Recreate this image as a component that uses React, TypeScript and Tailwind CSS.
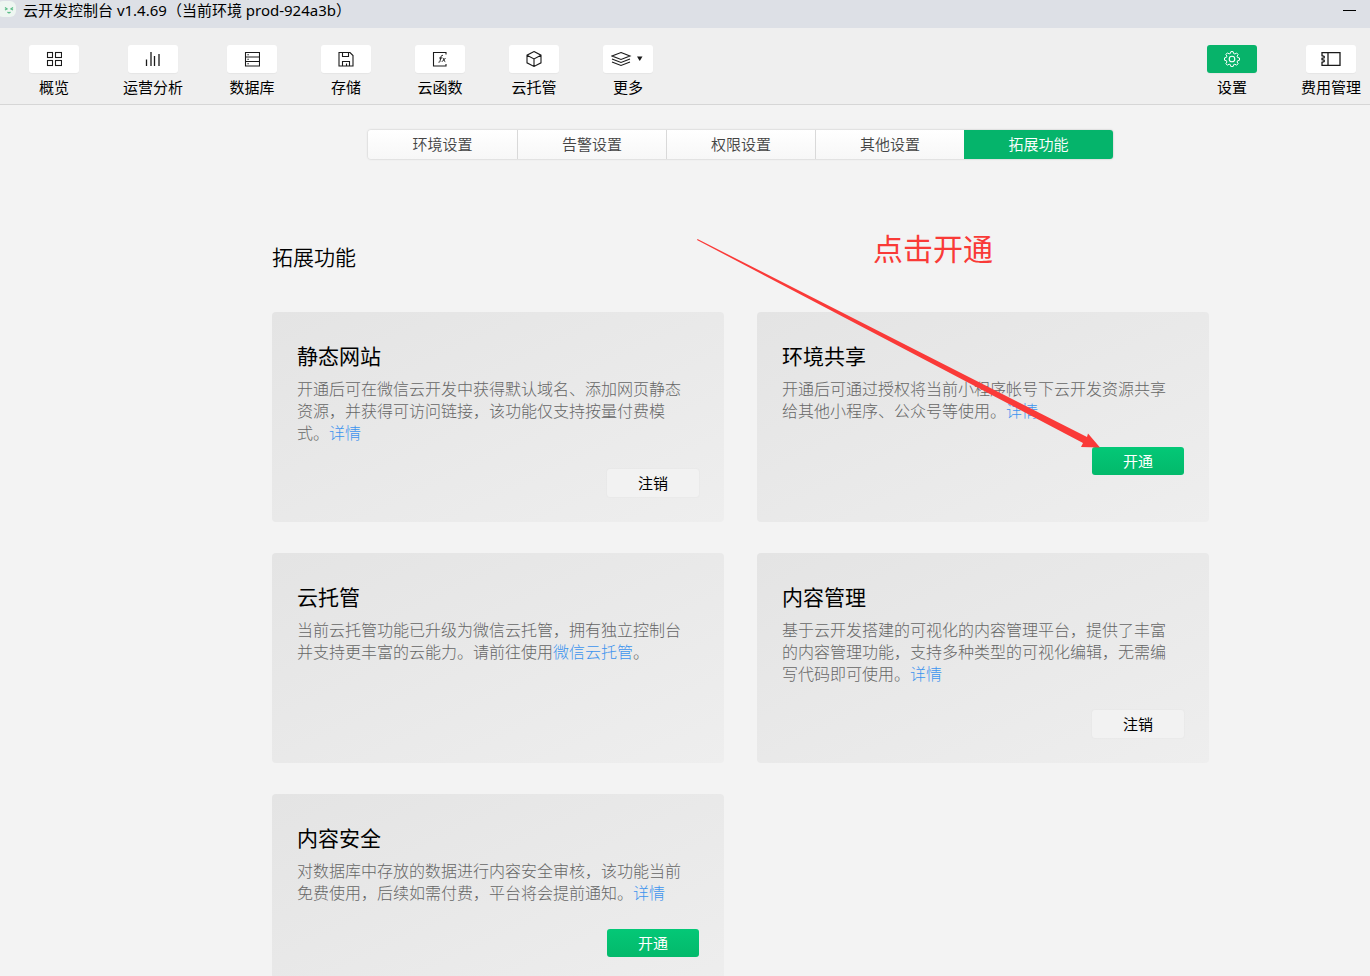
import type { ReactNode } from "react";
import clsx from "clsx";

function Icon({ children, width = 16 }: { children: ReactNode; width?: number }) {
  return (
    <svg width={width} height="16" viewBox={`0 0 ${width} 16`} fill="none" stroke="currentColor" strokeWidth="1.1" aria-hidden="true">
      {children}
    </svg>
  );
}

const icons = {
  overview: (
    <Icon>
      <rect x="1.5" y="1.5" width="5" height="5" />
      <rect x="9.5" y="1.5" width="6" height="5" />
      <rect x="1.5" y="9.5" width="5" height="5" />
      <rect x="9.5" y="9.5" width="6" height="5" />
    </Icon>
  ),
  analytics: (
    <Icon>
      <path d="M1.5 8.5v6.5M6 1v14M9.5 5v10M14 3v12" strokeWidth="1.3" />
    </Icon>
  ),
  database: (
    <Icon>
      <path d="M1.5 1.5h14v13.5h-14zM1.5 6h14M1.5 10.5h14M3.4 3.7h1.4M3.4 8.2h1.4M3.4 12.7h1.4" />
    </Icon>
  ),
  storage: (
    <Icon>
      <path d="M1 1.5h11l3 3v10.5H1zM4.5 1.5v4h6v-4M4.5 15v-4.5h7v4.5M8.5 12.5v2.5" />
    </Icon>
  ),
  functions: (
    <Icon>
      <path d="M14 3.5v-2H1.5V15H14v-2" />
      <path d="M11 4.5c-1.3-.5-1.8.3-2.1 1.7l-.8 3.600c-.2 1.2-.7 1.7-1.6 1.4M7.2 7h3M10.8 7c1.2-.2 1 4 2.5 3.7M13.5 7l-3.6 3.8" strokeWidth="1" />
    </Icon>
  ),
  container: (
    <Icon>
      <path d="M8 .6l7 3.6v7.6L8 15.4 1 11.8V4.2zM1 4.2l7 3.7 7-3.7M8 7.9v7.5" />
    </Icon>
  ),
  more: (
    <Icon width={34}>
      <path d="M10 1.5l9 3.5-9 3.5L1 5zM1 8l9 3.5L19 8M1 11l9 3.5 9-3.5" />
      <path d="M26 5.5h5.5L28.75 10z" fill="currentColor" stroke="none" />
    </Icon>
  ),
  settings: (
    <Icon>
      <path
        d="M6.9 .6h2.200l.5 1.900 1.300.5 1.700-1 1.500 1.500-1 1.700.5 1.300 1.900.5v2.200l-1.900.5-.5 1.300 1 1.700-1.500 1.500-1.700-1-1.300.5-.5 1.900H6.900l-.5-1.900-1.300-.5-1.700 1-1.500-1.500 1-1.700-.5-1.300-1.900-.5V6.900l1.900-.5.5-1.300-1-1.700 1.500-1.500 1.700 1 1.300-.5z"
        strokeLinejoin="round"
        strokeWidth="1"
      />
      <circle cx="8" cy="8" r="2.8" />
    </Icon>
  ),
  billing: (
    <Icon width={20}>
      <path d="M1 1.7h18v12.6H1v-3l2.2-.8V9.2L1 8.700V7.3l2.2-.5V5.5L1 4.700zM7 1.7v12.6" strokeWidth="1.3" />
    </Icon>
  ),
};

const navItems = [
  { label: "概览", icon: icons.overview },
  { label: "运营分析", icon: icons.analytics },
  { label: "数据库", icon: icons.database },
  { label: "存储", icon: icons.storage },
  { label: "云函数", icon: icons.functions },
  { label: "云托管", icon: icons.container },
  { label: "更多", icon: icons.more },
];

const tabs = ["环境设置", "告警设置", "权限设置", "其他设置", "拓展功能"];

type Feature = {
  title: string;
  text: string;
  link: string;
  tail?: string;
  action?: "开通" | "注销";
};

const features: Feature[] = [
  {
    title: "静态网站",
    text: "开通后可在微信云开发中获得默认域名、添加网页静态资源，并获得可访问链接，该功能仅支持按量付费模式。",
    link: "详情",
    action: "注销",
  },
  {
    title: "环境共享",
    text: "开通后可通过授权将当前小程序帐号下云开发资源共享给其他小程序、公众号等使用。",
    link: "详情",
    action: "开通",
  },
  {
    title: "云托管",
    text: "当前云托管功能已升级为微信云托管，拥有独立控制台并支持更丰富的云能力。请前往使用",
    link: "微信云托管",
    tail: "。",
  },
  {
    title: "内容管理",
    text: "基于云开发搭建的可视化的内容管理平台，提供了丰富的内容管理功能，支持多种类型的可视化编辑，无需编写代码即可使用。",
    link: "详情",
    action: "注销",
  },
  {
    title: "内容安全",
    text: "对数据库中存放的数据进行内容安全审核，该功能当前免费使用，后续如需付费，平台将会提前通知。",
    link: "详情",
    action: "开通",
  },
];

function NavButton({ label, icon, active }: { label: string; icon: ReactNode; active?: boolean }) {
  return (
    <button className="flex flex-col items-center gap-1 text-[15px] leading-5">
      <span
        className={clsx(
          "flex h-7 w-[50px] items-center justify-center rounded-[3px] shadow-[0_1px_1px_rgba(0,0,0,0.04)]",
          active ? "bg-[#07b36a] text-white" : "bg-white text-[#1a1a1a]"
        )}
      >
        {icon}
      </span>
      <span>{label}</span>
    </button>
  );
}

function FeatureCard({ title, text, link, tail, action }: Feature) {
  return (
    <article className="min-h-[210px] rounded bg-linear-to-br from-[#e4e4e4] to-[#eeeeee] px-[25px] pt-[29px] pb-6">
      <h2 className="text-[21px] leading-[30px]">{title}</h2>
      <p className="mt-[7px] pr-2 text-base leading-[22px] font-light text-[#666666]">
        {text}
        <a href="#" className="inline-block text-[#3d94ee]">{link}</a>
        {tail}
      </p>
      {action && (
        <div className="mt-[25px] flex justify-end">
          <button
            className={clsx(
              "h-7 w-[92px] rounded-[3px] text-[15px] leading-5",
              action === "开通"
                ? "bg-linear-to-b from-[#04c877] to-[#03b96b] text-white"
                : "bg-[#f2f2f2] shadow-[0_0_2px_rgba(0,0,0,0.06)]"
            )}
          >
            {action}
          </button>
        </div>
      )}
    </article>
  );
}

export default function App() {
  return (
    <div
      lang="zh-CN"
      className="flex h-screen flex-col overflow-hidden bg-[#f3f3f3] font-['Noto_Sans','Noto_Sans_CJK_SC',sans-serif] text-black"
    >
      <header className="flex h-7 shrink-0 items-start justify-between bg-[#dde0e6] pr-3.5">
        <div className="flex items-center gap-1.5">
          <svg width="17" height="18" viewBox="0 0 17 18" aria-hidden="true">
            <rect x="-3" y="0" width="19" height="16" rx="6" fill="#eef6f1" />
            <path d="M5 6.5l2 1.5-2 1M13 6.5l-2 1.5 2 1" fill="none" stroke="#5cbd88" strokeWidth="1.3" />
            <path d="M7.5 11q1.5 1.5 3 0" fill="none" stroke="#5cbd88" strokeWidth="1.2" />
          </svg>
          <h1 className="text-[15px] leading-5">云开发控制台 v1.4.69（当前环境 prod-924a3b）</h1>
        </div>
        <button aria-label="最小化" className="flex h-[21px] items-center">
          <span className="h-px w-[13px] bg-black" />
        </button>
      </header>

      <nav className="flex h-[77px] shrink-0 items-start justify-between border-b border-[#d6d6d6] bg-[#efefef] pt-[17px] pr-[9px] pl-[29px]">
        <div className="flex gap-11">
          {navItems.map((item) => (
            <NavButton key={item.label} {...item} />
          ))}
        </div>
        <div className="flex gap-11">
          <NavButton label="设置" icon={icons.settings} active />
          <NavButton label="费用管理" icon={icons.billing} />
        </div>
      </nav>

      <main className="flex-1 overflow-y-auto pt-[25px] pb-8 pl-[111px] [scrollbar-width:none]">
        <div className="mx-auto grid max-w-[745px] grid-cols-5 overflow-hidden rounded-[3px] shadow-[0_0_2px_rgba(0,0,0,0.25)]">
          {tabs.map((tab, i) => (
            <button
              key={tab}
              className={clsx(
                "h-[29px] text-[15px] font-[350]",
                i === tabs.length - 1
                  ? "bg-[#05b46b] text-white"
                  : "bg-linear-to-b from-white to-[#f7f7f7] text-[#444444]",
                i > 0 && i < tabs.length - 1 && "border-l border-[#d9d9d9]"
              )}
            >
              {tab}
            </button>
          ))}
        </div>

        <section className="relative mx-auto max-w-[937px] pt-[82px]">
          <h2 className="text-[21px] leading-8 font-[350]">拓展功能</h2>
          <div className="mt-[39px] grid grid-cols-2 gap-x-[33px] gap-y-[31px]">
            {features.map((feature) => (
              <FeatureCard key={feature.title} {...feature} />
            ))}
          </div>

          {/* hint pointing at the enable button */}
          <p className="pointer-events-none absolute top-[68px] left-[601px] text-[30px] leading-[44px] text-[#f93a37]">点击开通</p>
          <svg className="pointer-events-none absolute top-20 left-[425px]" width="404" height="210" viewBox="0 0 404 210" aria-hidden="true">
            <path d="M.5 0L390 198 391 194.5 403 208.5 384 208 386 204 0 1z" fill="#fa3a38" />
          </svg>
        </section>
      </main>
    </div>
  );
}
